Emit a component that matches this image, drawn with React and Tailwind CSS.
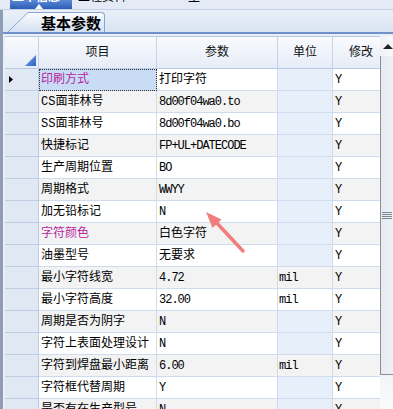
import React from 'react';

const rows = [
  { name: '印刷方式', value: '打印字符', unit: '', mod: 'Y', pink: true, selected: true },
  { name: 'CS面菲林号', value: '8d00f04wa0.to', unit: '', mod: 'Y' },
  { name: 'SS面菲林号', value: '8d00f04wa0.bo', unit: '', mod: 'Y' },
  { name: '快捷标记', value: 'FP+UL+DATECODE', unit: '', mod: 'Y' },
  { name: '生产周期位置', value: 'BO', unit: '', mod: 'Y' },
  { name: '周期格式', value: 'WWYY', unit: '', mod: 'Y' },
  { name: '加无铅标记', value: 'N', unit: '', mod: 'Y' },
  { name: '字符颜色', value: '白色字符', unit: '', mod: 'Y', pink: true },
  { name: '油墨型号', value: '无要求', unit: '', mod: 'Y' },
  { name: '最小字符线宽', value: '4.72', unit: 'mil', mod: 'Y' },
  { name: '最小字符高度', value: '32.00', unit: 'mil', mod: 'Y' },
  { name: '周期是否为阴字', value: 'N', unit: '', mod: 'Y' },
  { name: '字符上表面处理设计', value: 'N', unit: '', mod: 'Y' },
  { name: '字符到焊盘最小距离', value: '6.00', unit: 'mil', mod: 'Y' },
  { name: '字符框代替周期', value: 'Y', unit: '', mod: 'Y' },
  { name: '是否有在生产型号', value: 'N', unit: '', mod: 'Y' },
];

const hasCjk = (s) => /[\u4e00-\u9fff]/.test(s);

const TopStrip = () => (
  <div className="h-[10px] flex bg-[#e4ebf6] border-b border-[#c3d1e6] overflow-hidden">
    <div className="w-[10px]" />
    <div className="w-[62px] relative bg-gradient-to-b from-[#5a89d8] to-[#2d5db4] overflow-hidden">
      <div className="-mt-[8px] pl-[2px] text-[12px] leading-[12px] text-white font-bold">工单信息</div>
      <div className="absolute left-[25px] bottom-0 w-0 h-0 border-l-[4px] border-r-[4px] border-b-[5px] border-l-transparent border-r-transparent border-b-white" />
    </div>
    <div className="w-[6px]" />
    <div className="w-[110px] -mt-[8px] text-[12px] leading-[12px] text-black">工程资料</div>
    <div className="-mt-[7px] text-[12px] leading-[12px] text-black">工</div>
  </div>
);

const TabBar = () => (
  <div className="h-[22px] flex items-end bg-gradient-to-b from-[#e9f0f9] to-[#d9e4f3]">
    <div className="w-[5px]" />
    <div className="flex h-[20px]">
      <svg width="22" height="20" viewBox="0 0 22 20" className="block">
        <defs>
          <linearGradient id="tabg" x1="0" y1="0" x2="0" y2="1">
            <stop offset="0" stopColor="#fbfcfe" />
            <stop offset="1" stopColor="#d2e0f3" />
          </linearGradient>
        </defs>
        <path d="M0 20 L20 0.5 L22 0.5 L22 20 Z" fill="url(#tabg)" />
        <path d="M0 20 L20 0.5 L22 0.5" fill="none" stroke="#8ba5cf" strokeWidth="1" />
      </svg>
      <div className="w-[75px] flex items-center pl-[11px] bg-gradient-to-b from-[#fbfcfe] to-[#d2e0f3] border-t border-r border-[#8ba5cf] rounded-tr-[4px]">
        <span className="text-[15px] leading-[18px] font-bold text-black" style={{ fontFamily: '"Noto Sans CJK SC", sans-serif' }}>
          基本参数
        </span>
      </div>
    </div>
  </div>
);

const Header = () => (
  <div className="grid grid-cols-[34px_118px_121px_55px_56px] h-[33px] border-t border-b border-[#b8c9e3] bg-gradient-to-b from-[#f8fafd] to-[#e6edf8] text-[12px] text-[#111]">
    <div className="border-r border-[#c4d3ea] flex items-end justify-end pr-[2px] pb-[2px]">
      <svg width="11" height="11" viewBox="0 0 11 11">
        <defs>
          <linearGradient id="cornerg" x1="0" y1="0" x2="1" y2="1">
            <stop offset="0" stopColor="#7ea6e6" />
            <stop offset="1" stopColor="#2f62bf" />
          </linearGradient>
        </defs>
        <path d="M11 0 L11 11 L0 11 Z" fill="url(#cornerg)" />
      </svg>
    </div>
    <div className="border-r border-[#c4d3ea] flex items-center justify-center">项目</div>
    <div className="border-r border-[#c4d3ea] flex items-center justify-center">参数</div>
    <div className="border-r border-[#c4d3ea] flex items-center justify-center">单位</div>
    <div className="flex items-center justify-center">修改</div>
  </div>
);

const Row = ({ row, index }) => {
  const rowBg = index % 2 === 0 ? 'bg-white' : 'bg-[#f3f3f3]';
  const nameCls = row.selected
    ? 'bg-[#c9dcf5] outline outline-1 outline-dotted outline-[#333] -outline-offset-1'
    : rowBg;
  const valueCls = hasCjk(row.value) ? 'text-[12px]' : 'text-[12px] tracking-[-1px]';
  const unitBg = row.unit ? rowBg : 'bg-[#e7effa]';
  return (
    <div className="grid grid-cols-[34px_118px_121px_55px_56px] h-[22px]">
      <div className="bg-[#e0e8f4] border-r border-b border-[#bfcde2] flex items-center pl-[4px]">
        {row.selected && (
          <svg width="4" height="7" viewBox="0 0 4 7">
            <path d="M0 0 L4 3.5 L0 7 Z" fill="#000" />
          </svg>
        )}
      </div>
      <div
        className={`${nameCls} border-r border-b border-[#d0dcee] flex items-center pl-[2px] text-[12px] whitespace-nowrap ${
          row.pink ? 'text-[#b5279f]' : 'text-black'
        }`}
      >
        {row.name}
      </div>
      <div className={`${rowBg} border-r border-b border-[#d0dcee] flex items-center pl-[2px] whitespace-nowrap text-black ${valueCls}`}>
        {row.value}
      </div>
      <div className={`${unitBg} border-r border-b border-[#d0dcee] flex items-center pl-[1px] text-[12px] tracking-[-1px] text-black`}>
        {row.unit}
      </div>
      <div className={`${rowBg} border-b border-[#d0dcee] flex items-center pl-[2px] text-[12px] text-black`}>{row.mod}</div>
    </div>
  );
};

const ScrollBar = () => (
  <div className="w-[13px] flex flex-col bg-gradient-to-r from-[#eef1f6] to-[#f7f8fb]">
    <div className="h-[20px] flex items-center justify-center pl-[2px]">
      <div className="w-0 h-0 border-l-[5px] border-r-[5px] border-b-[5px] border-l-transparent border-r-transparent border-b-[#222]" />
    </div>
    <div className="h-[319px] bg-gradient-to-r from-[#e6ebf3] to-[#eef1f7] border-l border-b border-[#8e8e8e] flex items-center justify-center">
      <div className="flex flex-col gap-[1px]">
        <div className="w-[10px] h-px bg-[#7f8794]" />
        <div className="w-[10px] h-px bg-[#7f8794]" />
        <div className="w-[10px] h-px bg-[#7f8794]" />
        <div className="w-[10px] h-px bg-[#7f8794]" />
      </div>
    </div>
    <div className="flex-1 bg-gradient-to-b from-[#f2f4f8] to-[#fbfbfc]" />
  </div>
);

export default function App() {
  return (
    <div
      className="w-[393px] h-[409px] overflow-hidden relative bg-[#e9eff8]"
      style={{ fontFamily: '"Liberation Mono", "Noto Sans CJK SC", monospace' }}
    >
      <TopStrip />
      <div className="flex h-[399px]">
        <div className="w-[3px] bg-[#8f9db5]" />
        <div className="flex-1 flex flex-col">
          <TabBar />
          <div className="h-[2px] bg-[#6f90c9]" />
          <div className="flex-1 flex pt-[2px] pl-[2px] overflow-hidden">
            <div className="w-[375px] overflow-hidden">
              <Header />
              {rows.map((row, i) => (
                <Row key={row.name} row={row} index={i} />
              ))}
            </div>
            <ScrollBar />
          </div>
        </div>
      </div>

      {/* annotation arrow */}
      <svg className="absolute left-0 top-0 pointer-events-none" width="393" height="409" viewBox="0 0 393 409">
        <line x1="243" y1="251" x2="214" y2="220" stroke="#f27d7d" strokeWidth="3.5" strokeLinecap="round" />
        <path d="M206 212 L221.5 219.5 L212.5 228 Z" fill="#f27d7d" />
      </svg>
    </div>
  );
}
